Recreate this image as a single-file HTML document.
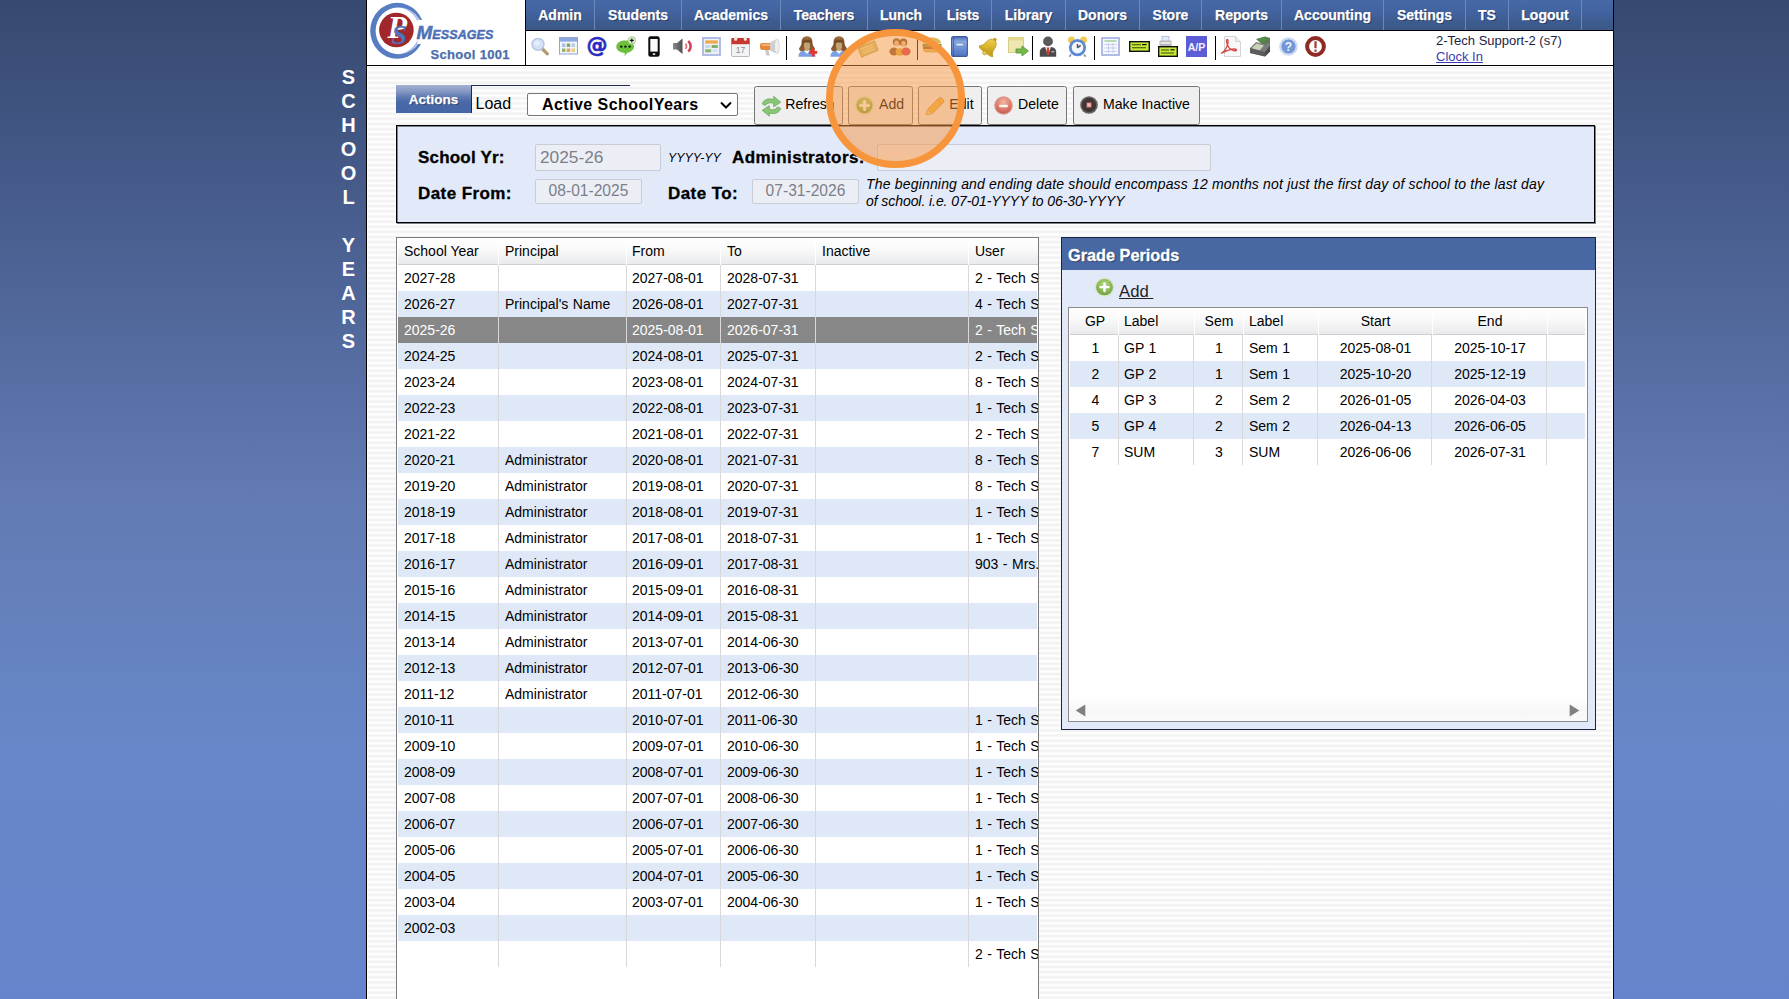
<!DOCTYPE html>
<html lang="en">
<head>
<meta charset="utf-8">
<title>School Years</title>
<style>
*{box-sizing:border-box;margin:0;padding:0}
html,body{width:1789px;height:999px;overflow:hidden}
body{position:relative;font-family:"Liberation Sans",sans-serif;font-size:14px;color:#000;
 background:linear-gradient(180deg,#364971 0px,#4b6192 250px,#627bb4 500px,#6887c8 750px,#6584cb 999px);}
.abs{position:absolute}
#wrap{position:absolute;left:366px;top:0;width:1248px;height:999px;background:#fff;border-left:1px solid #000;border-right:1px solid #000;overflow:hidden}
#stripes{position:absolute;left:1px;top:67px;right:1px;bottom:0;
 background:repeating-linear-gradient(180deg,#f2f2f2 0px,#f2f2f2 1px,#fdfdfd 2.400px,#fefefe 3.400px,#f2f2f2 5.140px);}
#vtitle{position:absolute;left:338.500px;top:65px;width:20px;text-align:center;word-break:break-all;overflow-wrap:anywhere;color:#fff;font:bold 20px/24px "Liberation Sans",sans-serif}
/* header */
#logo{position:absolute;left:0;top:0;width:158px;height:65px;background:#fff}
#hline{position:absolute;left:0;top:65px;width:1246px;height:1px;background:#000}
#vline{position:absolute;left:158px;top:0;width:1px;height:65px;background:#000}
#nav{position:absolute;left:159px;top:0;width:1087px;height:30px;background:linear-gradient(180deg,#466aa8 0%,#41629d 45%,#3d5b8e 75%,#3d5888 100%)}
#navline{position:absolute;left:159px;top:30px;width:1087px;height:1px;background:#000}
#nav a{-webkit-text-stroke:0.25px #fff;position:absolute;top:0;height:30px;line-height:30px;text-align:center;color:#fff;font:bold 14px/30px "Liberation Sans",sans-serif;text-decoration:none;border-right:1px solid #6c88bd;text-shadow:1px 1px 0 #24345c;white-space:nowrap}
#tools{position:absolute;left:159px;top:31px;width:1087px;height:34px;background:#fff}
#tools svg{position:absolute;top:4px}
#tools i{position:absolute;top:5px;width:1px;height:24px;background:#000}
#user{position:absolute;left:1069px;top:33px;font:13px/15px "Liberation Sans",sans-serif;color:#1c1c48;white-space:nowrap}
#user a{color:#3a3ab6;text-decoration:underline;position:relative;top:1px}
/* actions row (coords relative to #wrap inner: abs x - 367) */
#tab{-webkit-text-stroke:0.25px #fff;position:absolute;left:29px;top:85px;width:75px;height:28px;background:linear-gradient(180deg,#a3b0d0 0%,#8799c4 22%,#5c78b1 45%,#4868a7 62%,#4666a5 100%);color:#fff;font:bold 13.5px/29px "Liberation Sans",sans-serif;text-align:center;text-shadow:1px 1px 1px #2a3c66}
#tabtop{position:absolute;left:104px;top:85px;width:159px;height:1px;background:#1d2b50}
#tableft{position:absolute;left:104px;top:85px;width:1px;height:28px;background:#1d2b50}
#load{position:absolute;left:108.500px;top:92px;font:16px/24px "Liberation Sans",sans-serif;color:#000}
#sel{position:absolute;left:160px;top:93px;width:211px;height:23px;background:#fff;border:1px solid #767676;border-radius:2px;font:bold 16px/21px "Liberation Sans",sans-serif;letter-spacing:0.45px;color:#000;padding-left:14px;white-space:nowrap}
#sel svg{position:absolute;right:4px;top:6px}
.btn{position:absolute;top:86px;height:39px;background:#efefef;border:1px solid #767676;border-radius:2.500px;font:14.1px/37px "Liberation Sans",sans-serif;color:#000;white-space:nowrap}
.btn svg{position:absolute;left:6px;top:9px}
.btn span{position:absolute;top:-1px}
/* form panel */
#form{position:absolute;left:29px;top:125px;width:1200px;height:99px;background:#e2e9f9;border:2px solid transparent}
#form:before{content:"";box-sizing:border-box;position:absolute;left:-2px;top:-2px;width:1199px;height:98px;border:1px solid #000;box-shadow:inset 1px 1px 0 0 rgba(0,0,0,.45),1px 1px 0 0 rgba(0,0,0,.45)}
#form b{-webkit-text-stroke:0.3px #000;position:absolute;font:bold 17px/22px "Liberation Sans",sans-serif;letter-spacing:0.42px;color:#000;white-space:nowrap}
#form em{position:absolute;font:italic 14px/17px "Liberation Sans",sans-serif;letter-spacing:0.18px;color:#000;white-space:nowrap}
.inp{position:absolute;background:#eceef5;border:1px solid #c9ccd6;border-radius:2px;color:#7b7f8a;font-family:"Liberation Sans",sans-serif;white-space:nowrap}
/* grid */
#grid{position:absolute;left:29px;top:237px;width:643px;height:780px;background:#fff;border:1px solid #7b7b7b;overflow:hidden}
.gh{position:absolute;top:0;height:27px;background:linear-gradient(180deg,#fff 0%,#fafafa 40%,#e9eaec 100%);border-bottom:1px solid #cfcfcf;font:14px/26px "Liberation Sans",sans-serif;padding-left:6px;white-space:nowrap;overflow:hidden}
.row{position:absolute;left:1px;height:26px;width:639px;background:#fff;word-spacing:0.6px}
.row.alt{background:#dee8f7}
.row.sel{background:#878787;color:#fff}
.row span{position:absolute;top:0;height:26px;line-height:26px;padding-left:6px;white-space:nowrap;overflow:hidden;font-size:14px}
.cs{position:absolute;top:27px;width:1px;background:#d9d9d9}
/* grade periods */
#gp{position:absolute;left:694px;top:237px;width:535px;height:493px;background:#e2e9f9;border:1px solid #1b2440}
#gpt{-webkit-text-stroke:0.3px #fff;position:absolute;left:0;top:0;width:533px;height:32px;background:#4868a4;color:#fff;font:bold 16.3px/35px "Liberation Sans",sans-serif;padding-left:6px;text-shadow:1px 1px 1px #26375e}
#gpadd{position:absolute;left:57px;top:43px;font:16.7px/22px "Liberation Sans",sans-serif;color:#222;text-decoration:underline;white-space:pre}
#gg{position:absolute;left:6px;top:69px;width:520px;height:415px;background:#fff;border:1px solid #8b8b8b;overflow:hidden}
#gg .gh{padding-left:0;text-align:center}
#gg .row{left:1px;width:515px}
#gg .row span{padding-left:0;text-align:center}
#hl{position:absolute;left:826.2px;top:29px;width:138.5px;height:138.5px;border-radius:50%;border:7px solid #f7953c;background:rgba(248,148,62,.5)}
</style>
</head>
<body>
<div id="vtitle"><div>SCHOOL</div><div style="margin-top:24px">YEARS</div></div>
<div id="wrap">
<div id="stripes"></div>
<div id="logo"><svg width="158" height="65" viewBox="0 0 158 65"><defs><linearGradient id="lgm" x1="0" y1="0" x2="0" y2="1"><stop offset="0" stop-color="#5a80c6"/><stop offset="1" stop-color="#4263a8"/></linearGradient></defs>
<ellipse cx="30" cy="30.800" rx="23.200" ry="24.200" fill="none" stroke="#a9bde6" stroke-width="1.800"/>
<path fill-rule="evenodd" fill="#587cc2" d="M3.200 30.800a27 28 0 1 0 54 0a27 28 0 1 0 -54 0zM8.600 30.800a23.200 23.600 0 1 1 46.400 0a23.200 23.600 0 1 1 -46.400 0z"/>
<path d="M50.500 20h9v24h-9z" fill="#fff"/>
<path d="M52 19.500l6 1.500-6 2z" fill="#fff"/>
<circle cx="29.400" cy="30" r="17.300" fill="#a1272b"/>
<text x="20.500" y="37.800" font-family="Liberation Serif,serif" font-weight="bold" font-style="italic" font-size="32" fill="#fff">P</text>
<text x="24.500" y="44.200" font-family="Liberation Serif,serif" font-weight="bold" font-style="italic" font-size="28" fill="#4d73c0">S</text>
<text x="49.500" y="39.300" font-family="Liberation Sans,sans-serif" font-weight="bold" font-style="italic" fill="url(#lgm)" stroke="#4a6db6" stroke-width="0.450"><tspan font-size="19">M</tspan><tspan font-size="12.500" letter-spacing="0.100">ESSAGES</tspan></text>
<text x="63.500" y="58.600" font-family="Liberation Sans,sans-serif" font-weight="bold" font-size="13" letter-spacing="0.320" fill="#4a6ea9" stroke="#4a6ea9" stroke-width="0.250">School 1001</text>
</svg>
</div>
<div id="vline"></div>
<div id="nav">
<a style="left:0px;width:69px">Admin</a>
<a style="left:69px;width:87px">Students</a>
<a style="left:156px;width:99px">Academics</a>
<a style="left:255px;width:87px">Teachers</a>
<a style="left:342px;width:67px">Lunch</a>
<a style="left:409px;width:57px">Lists</a>
<a style="left:466px;width:74px">Library</a>
<a style="left:540px;width:74px">Donors</a>
<a style="left:614px;width:62px">Store</a>
<a style="left:676px;width:80px">Reports</a>
<a style="left:756px;width:102px">Accounting</a>
<a style="left:858px;width:82px">Settings</a>
<a style="left:940px;width:43px">TS</a>
<a style="left:983px;width:73px">Logout</a>
</div>
<div id="navline"></div>
<div id="tools">
<svg style="left:5px;top:6px" width="19" height="19" viewBox="0 0 19 19"><line x1="11.5" y1="12" x2="16.3" y2="16.8" stroke="#b39a6e" stroke-width="3.2" stroke-linecap="round"/><circle cx="7" cy="7.3" r="6" fill="#d3e0f7" stroke="#b4c3e0" stroke-width="1.3"/><circle cx="6" cy="6" r="2.6" fill="#e6eefc"/></svg>
<svg style="left:33px;top:6px" width="19" height="18" viewBox="0 0 19 18"><rect x="0.5" y="0.5" width="18" height="16.5" fill="#f0f4fc" stroke="#93a6d2"/><rect x="1" y="1" width="17" height="3.6" fill="#8ea8dc"/><rect x="3" y="6.5" width="3.4" height="3.4" fill="#a9bde6"/><rect x="7.8" y="6.5" width="3.4" height="3.4" fill="#7ea65c"/><rect x="12.6" y="6.5" width="3.4" height="3.4" fill="#b9c9ea"/><rect x="3" y="11.5" width="3.4" height="3.4" fill="#8db36c"/><rect x="7.8" y="11.5" width="3.4" height="3.4" fill="#e3a060"/><rect x="12.6" y="11.5" width="3.4" height="3.4" fill="#e8d27c"/></svg>
<svg style="left:59px;top:2px" width="24" height="26" viewBox="0 0 24 26"><text x="12" y="19.3" text-anchor="middle" font-family="DejaVu Sans,Liberation Sans,sans-serif" font-weight="bold" font-size="21" fill="#2b2bc2" stroke="#2b2bc2" stroke-width="0.6">@</text></svg>
<svg style="left:90px;top:5px" width="20" height="21" viewBox="0 0 20 21"><path d="M9 4.5c5 0 9 2.7 9 6.2 0 3-3 5.3-6.8 6l-2.6 3.6 0.2-3.4C4 16.7 0.3 14.1 0.3 10.7 0.3 7.2 4 4.5 9 4.5z" fill="#6cc03c"/><circle cx="5.2" cy="10.6" r="1.2" fill="#0c1a05"/><circle cx="9.4" cy="10.6" r="1.2" fill="#0c1a05"/><circle cx="13.6" cy="10.6" r="1.2" fill="#0c1a05"/><circle cx="15.8" cy="4.4" r="3.7" fill="#e4f2d8" stroke="#9acb7c" stroke-width="0.9"/><path d="M15.8 2.4v4M13.8 4.4h4" stroke="#1a1a1a" stroke-width="1.2"/></svg>
<svg style="left:122px;top:5px" width="12" height="21" viewBox="0 0 12 21"><rect x="0.3" y="0.2" width="11.4" height="20.6" rx="2.3" fill="#0d0d0d"/><rect x="2.3" y="3" width="7.4" height="12.6" fill="#fafafa"/><rect x="4.6" y="17.2" width="2.8" height="1.8" rx="0.8" fill="#e8e8e8"/></svg>
<svg style="left:146px;top:7px" width="23" height="17" viewBox="0 0 23 17"><defs><linearGradient id="spk" x1="0" x2="1"><stop offset="0" stop-color="#8a8a8a"/><stop offset="1" stop-color="#4d4d4d"/></linearGradient></defs><path d="M1 5h4l5.5-4.6v15.6L5 11.6H1z" fill="url(#spk)"/><path d="M13.4 5.6a3.6 3.6 0 0 1 0 5.2" fill="none" stroke="#e07080" stroke-width="1.8"/><path d="M16.2 3a7 7 0 0 1 0 10.6" fill="none" stroke="#cf4458" stroke-width="2.6"/></svg>
<svg style="left:176px;top:6px" width="19" height="19" viewBox="0 0 19 19"><rect x="1" y="1" width="17" height="17" fill="#eef2fb" stroke="#aab6e2" stroke-width="1.8"/><rect x="3.2" y="3.4" width="12.6" height="3.2" fill="#f0a848"/><rect x="3.2" y="8" width="5" height="3" fill="#c8d6f0"/><rect x="9.6" y="8" width="6.2" height="3" fill="#7fb26a"/><rect x="3.2" y="12.2" width="6" height="3.2" fill="#86b870"/><rect x="10.4" y="12.2" width="5.4" height="3.2" fill="#d5e0f4"/></svg>
<svg style="left:205px;top:5px" width="19" height="21" viewBox="0 0 19 21"><rect x="0.5" y="2.5" width="18" height="18" rx="1" fill="#f3f3f3" stroke="#b9b9b9"/><rect x="0.5" y="2" width="18" height="6.2" fill="#c8372c"/><rect x="3.2" y="0.4" width="3" height="4.4" rx="1.2" fill="#f1e6e4"/><rect x="12.8" y="0.4" width="3" height="4.4" rx="1.2" fill="#f1e6e4"/><text x="9.5" y="17" text-anchor="middle" font-family="Liberation Sans,sans-serif" font-size="8.5" fill="#8a8a8a">17</text></svg>
<svg style="left:233px;top:7px" width="21" height="19" viewBox="0 0 21 19"><path d="M1 7.2c0-1.4 1-2.2 2.2-2.2h8.3v7H3.2C2 12 1 11 1 9.8z" fill="#e58a3c"/><path d="M3 6h8v2H3z" fill="#f3b070"/><path d="M11 4.6L18 0.8c1.6 0 2.6 3.4 2.6 7.6s-1 7.6-2.6 7.6L11 12.4z" fill="#cfcfcf"/><path d="M17.6 1.2c1.3 0.4 2.3 3.4 2.3 7.2s-1 6.8-2.3 7.2c-1-1-1.6-4-1.6-7.2s0.6-6.2 1.6-7.2z" fill="#efefef"/><path d="M6 12h3.4l1.4 5.6H7.4z" fill="#c9c9c9"/></svg>
<i style="left:260px"></i>
<svg style="left:271.5px;top:5px" width="20" height="21" viewBox="0 0 20 21"><defs><linearGradient id="hr797" x1="0" y1="0" x2="0" y2="1"><stop offset="0" stop-color="#a87a4a"/><stop offset="0.350" stop-color="#7c4e28"/><stop offset="1" stop-color="#8e6034"/></linearGradient></defs><path d="M0.400 20.800c0-3.400 1.800-5.400 4.600-6h8c2.800 0.600 4.600 2.600 4.600 6z" fill="#7b9fe2"/><path d="M5.600 14.600l3.400 3.400 3.400-3.400z" fill="#f4f6fb"/><path d="M9 0.200c3.600 0 5.400 2.400 5.400 5.800 0 2.400 0.600 4 2 5.400 1.200 1.400 0.400 3.400-1.600 3.800-1.400 0.200-2.600-0.200-3.400-1H6.600c-0.800 0.800-2 1.200-3.400 1-2-0.400-2.800-2.400-1.600-3.800 1.400-1.400 2-3 2-5.400C3.600 2.600 5.400 0.200 9 0.200z" fill="url(#hr797)"/><ellipse cx="9" cy="9.600" rx="3.100" ry="5.200" fill="#c4a272"/><path d="M5.400 5.400c1.200-1.400 6-1.400 7.200 0-1 0.800-2.400 1.200-3.600 1.200s-2.600-0.400-3.600-1.200z" fill="#6e4422"/><path d="M15.200 12.400v8M11.200 16.400h8" stroke="#e43434" stroke-width="2.800"/></svg>
<svg style="left:303.5px;top:5px" width="20" height="21" viewBox="0 0 20 21"><defs><linearGradient id="hr829" x1="0" y1="0" x2="0" y2="1"><stop offset="0" stop-color="#a87a4a"/><stop offset="0.350" stop-color="#7c4e28"/><stop offset="1" stop-color="#8e6034"/></linearGradient></defs><path d="M0.400 20.800c0-3.400 1.800-5.400 4.600-6h8c2.800 0.600 4.600 2.600 4.600 6z" fill="#7b9fe2"/><path d="M5.600 14.600l3.400 3.400 3.400-3.400z" fill="#f4f6fb"/><path d="M9 0.200c3.600 0 5.400 2.400 5.400 5.800 0 2.400 0.600 4 2 5.400 1.200 1.400 0.400 3.400-1.600 3.800-1.400 0.200-2.600-0.200-3.400-1H6.600c-0.800 0.800-2 1.200-3.400 1-2-0.400-2.800-2.400-1.600-3.800 1.400-1.400 2-3 2-5.400C3.600 2.600 5.400 0.200 9 0.200z" fill="url(#hr829)"/><ellipse cx="9" cy="9.600" rx="3.100" ry="5.200" fill="#c4a272"/><path d="M5.400 5.400c1.200-1.400 6-1.400 7.200 0-1 0.800-2.400 1.200-3.600 1.200s-2.600-0.400-3.600-1.200z" fill="#6e4422"/></svg>
<svg style="left:332px;top:9px" width="21" height="18" viewBox="0 0 21 18"><g transform="rotate(-22 10 9)"><rect x="1" y="4" width="18" height="10" fill="#d2c878" stroke="#b8ae5e"/><path d="M4 6.500h12M4 9h12M4 11.500h12" stroke="#efe6a8" stroke-width="1.200"/></g></svg>
<svg style="left:363px;top:6px" width="22" height="19" viewBox="0 0 22 19"><circle cx="7.500" cy="5" r="3.800" fill="#8a5a34"/><circle cx="14.500" cy="5.400" r="3.800" fill="#7a4a2a"/><ellipse cx="7.500" cy="6.200" rx="2.200" ry="2.800" fill="#e8c49a"/><ellipse cx="14.500" cy="6.600" rx="2.200" ry="2.800" fill="#e8c49a"/><ellipse cx="5" cy="14.500" rx="4.600" ry="4" fill="#8a5a34"/><ellipse cx="11" cy="15" rx="4.400" ry="3.800" fill="#e0b040"/><ellipse cx="17" cy="14.500" rx="4.600" ry="4" fill="#d8405c"/></svg>
<i style="left:391px"></i>
<svg style="left:396px;top:6px" width="20" height="16" viewBox="0 0 20 16"><path d="M1 6.500C1 2.500 5 0.500 10 0.500s9 2 9 6z" fill="#e0b85a"/><rect x="0.500" y="7" width="19" height="2.600" fill="#7aa040"/><rect x="1" y="9.400" width="18" height="2.600" fill="#a8602c"/><path d="M1 12.200h18c0 2-1.600 3.200-3.600 3.200H4.600C2.600 15.400 1 14.200 1 12.200z" fill="#e0b85a"/></svg>
<svg style="left:425px;top:5px" width="17" height="21" viewBox="0 0 17 21"><defs><linearGradient id="bk" x1="0" y1="0" x2="0" y2="1"><stop offset="0" stop-color="#4f70b4"/><stop offset="0.250" stop-color="#86a6de"/><stop offset="1" stop-color="#4c74c0"/></linearGradient></defs><rect x="0.600" y="0.600" width="15.800" height="19.800" rx="2" fill="url(#bk)" stroke="#3f5c98" stroke-width="1.100"/><path d="M2.600 1v19" stroke="#3f5c98" stroke-width="0.800"/><path d="M5.500 8.600h6.500" stroke="#e8f0ff" stroke-width="1.600"/></svg>
<svg style="left:453px;top:5px" width="21" height="21" viewBox="0 0 21 21"><defs><linearGradient id="bl" x1="0" y1="0" x2="1" y2="1"><stop offset="0" stop-color="#f2dc6a"/><stop offset="0.550" stop-color="#dcb62a"/><stop offset="1" stop-color="#b08c18"/></linearGradient></defs><g transform="rotate(38 10.500 10.500)"><circle cx="10.500" cy="1.800" r="1.900" fill="#c6a224"/><path d="M10.500 2.600C6.800 2.600 5.400 5.800 5.100 9.800 4.900 13.400 3.400 15 1.400 16.800H19.600C17.600 15 16.100 13.400 15.900 9.800 15.600 5.800 14.200 2.600 10.500 2.600z" fill="url(#bl)" stroke="#b8961e" stroke-width="0.700"/><ellipse cx="10.500" cy="16.800" rx="9" ry="1.700" fill="#c9a628"/><circle cx="10.500" cy="18.600" r="1.900" fill="#e8cc58" stroke="#a88618" stroke-width="0.500"/></g></svg>
<svg style="left:482px;top:6px" width="21" height="20" viewBox="0 0 21 20"><rect x="0.500" y="0.500" width="15" height="15" fill="#efe7b0" stroke="#d6cc8e"/><rect x="0.500" y="0.500" width="15" height="3" fill="#e6da90"/><path d="M8 12h6V9l6.400 5-6.400 5v-3H8z" fill="#78b848" stroke="#5a963a" stroke-width="0.900"/></svg>
<i style="left:506px"></i>
<svg style="left:513px;top:5px" width="18" height="21" viewBox="0 0 18 21"><circle cx="9" cy="5.400" r="4.900" fill="#5a5a5a"/><path d="M0.800 20.800v-5c0-2.600 2-4.400 5-4.800h6.400c3 0.400 5 2.200 5 4.800v5z" fill="#4a4a4a"/><path d="M6 11l3 8 3-8z" fill="#f4dcd8"/><path d="M8.200 11.400h1.600l0.800 5.400-1.600 2.400-1.600-2.400z" fill="#d83a2e"/><rect x="12.400" y="15" width="3" height="1.400" fill="#b0b0b0"/></svg>
<svg style="left:541px;top:5px" width="21" height="21" viewBox="0 0 21 21"><circle cx="4.400" cy="4" r="3.400" fill="#f0ca52"/><circle cx="16.600" cy="4" r="3.400" fill="#f0ca52"/><path d="M4 18.500l-1.600 2.200M17 18.500l1.600 2.200" stroke="#7a8cb0" stroke-width="1.600"/><circle cx="10.500" cy="11.600" r="8.600" fill="#5f88d4"/><circle cx="10.500" cy="11.600" r="5.800" fill="#f2f7ff"/><path d="M10.500 11.800V8M10.500 11.800l3.200-2.400" stroke="#555" stroke-width="1.500" fill="none"/></svg>
<i style="left:568px"></i>
<svg style="left:575px;top:6px" width="19" height="19" viewBox="0 0 19 19"><rect x="1" y="1" width="17" height="17" fill="#f6f8fe" stroke="#a9b5e3" stroke-width="1.800"/><path d="M3.500 4h12" stroke="#9ccf8a" stroke-width="1.400"/><path d="M3.500 7.500h12M3.500 11h12M3.500 14.500h12M7.500 6v10M12 6v10" stroke="#c5cff0" stroke-width="1"/></svg>
<svg style="left:603px;top:10px" width="21" height="11" viewBox="0 0 21 11"><rect x="0.700" y="0.700" width="19.600" height="9.600" fill="#c6ea38" stroke="#101010" stroke-width="1.400"/><path d="M3 3.800h9M3 6.800h14" stroke="#3a4a08" stroke-width="1.100"/><path d="M13 3.600h4.600" stroke="#101010" stroke-width="1.200"/></svg>
<svg style="left:632px;top:5px" width="20" height="21" viewBox="0 0 20 21"><rect x="4" y="0.500" width="7" height="5" fill="#e4ecfa" stroke="#a8b8d8" stroke-width="0.800"/><rect x="1.500" y="4.500" width="12" height="7" rx="1" fill="#b8b8b8"/><rect x="2.500" y="6" width="10" height="2" fill="#e6e6e6"/><rect x="0.700" y="10.700" width="18.600" height="9.600" fill="#c6ea38" stroke="#101010" stroke-width="1.400"/><path d="M3 14h8M3 17h13" stroke="#3a4a08" stroke-width="1.100"/><path d="M12.500 13.800h4" stroke="#101010" stroke-width="1.200"/></svg>
<svg style="left:660px;top:5px" width="21" height="21" viewBox="0 0 21 21"><rect x="0" y="0" width="21" height="21" fill="#5c5cd6"/><text x="10.500" y="14.600" text-anchor="middle" font-family="Liberation Sans,sans-serif" font-weight="bold" font-size="10.500" fill="#f2f2ff">A/P</text></svg>
<i style="left:689px"></i>
<svg style="left:694px;top:5px" width="22" height="21" viewBox="0 0 22 21"><path d="M4.500 0.500h11l5 5v15h-16z" fill="#f9f9f9" stroke="#d4d4d4"/><path d="M15.500 0.500v5h5" fill="#ececec" stroke="#d4d4d4"/><path d="M1 17.500c2-1 5-4 6.500-8.500 0.800-2.400 0.800-5.500-0.300-5.500-1.200 0-0.700 3.400 0.800 6.500 1.600 3.200 5 5.400 8 4.600 1-0.400 0.400-1.600-1.400-1.600-3 0-9 2-13.600 4.500z" fill="none" stroke="#d44848" stroke-width="1.300"/></svg>
<svg style="left:723px;top:5px" width="22" height="21" viewBox="0 0 22 21"><path d="M7 3l9-2.600 5 1.600v7l-5 2z" fill="#5e7a54"/><path d="M8.500 4l7-2 3.500 1.200-7 2.400z" fill="#4a9a3c"/><path d="M1 12l6-6 9 2.500 5-2v9l-5 5L1 17z" fill="#7c7c7c"/><path d="M2.500 12.200l5-4.800 7.500 2-4.500 5z" fill="#c8d4b8"/><path d="M1 12l15 4v4.500L1 17z" fill="#5c5c5c"/><path d="M16 16l5-6.500v6l-5 5z" fill="#4a4a4a"/></svg>
<svg style="left:753px;top:6px" width="19" height="19" viewBox="0 0 19 19"><circle cx="9.500" cy="9.500" r="9.300" fill="#c9d6f0"/><circle cx="9.500" cy="9.500" r="7.600" fill="#7396d6" stroke="#e4ecfb" stroke-width="0.800"/><text x="9.500" y="13.800" text-anchor="middle" font-family="Liberation Sans,sans-serif" font-weight="bold" font-size="12" fill="#eef3ff">?</text></svg>
<svg style="left:779px;top:5px" width="21" height="21" viewBox="0 0 21 21"><circle cx="10.500" cy="10.500" r="8.400" fill="#fff" stroke="#8f2b23" stroke-width="4"/><rect x="9.400" y="5.200" width="2.200" height="7" fill="#a8382e"/><rect x="9.400" y="13.600" width="2.200" height="2.200" fill="#8a4038"/></svg>

</div>
<div id="user">2-Tech Support-2 (s7)<br><a>Clock In</a></div>
<div id="hline"></div>
<div id="tab">Actions</div><div id="tabtop"></div><div id="tableft"></div>
<div id="load">Load</div>
<div id="sel">Active SchoolYears<svg width="14" height="10" viewBox="0 0 14 10"><path d="M2 2.5 L7 7.5 L12 2.5" fill="none" stroke="#000" stroke-width="2"/></svg></div>
<div class="btn" style="left:387px;width:89px"><svg style="left:5px;top:8px" width="23" height="22.500" viewBox="0 0 21 20.500"><path d="M2 8.200C3.500 4 8 2.500 12.500 4.200V1.200L19 6.500l-6.500 4.300V7.800C9.500 6.500 6.500 7 5 9.600z" fill="#86c674" stroke="#6aa95a" stroke-width="0.700"/><path d="M19 12.300C17.500 16.500 13 18 8.500 16.300v3L2 14l6.500-4.300v3C11.500 14 14.500 13.500 16 10.900z" fill="#86c674" stroke="#6aa95a" stroke-width="0.700"/></svg><span style="left:30.3px">Refresh</span></div>
<div class="btn" style="left:481px;width:65px"><svg style="left:6px;top:8.7px" width="19" height="19" viewBox="0 0 19 19"><defs><radialGradient id="gB" cx="50%" cy="35%" r="65%"><stop offset="0" stop-color="#c4e096"/><stop offset="1" stop-color="#72a43e"/></radialGradient></defs><circle cx="9.500" cy="9.500" r="9.200" fill="#cfe3b4"/><circle cx="9.500" cy="9.500" r="7.800" fill="url(#gB)"/><path d="M9.500 5.200v8.600M5.200 9.500h8.600" stroke="#fff" stroke-width="2.600" stroke-linecap="round"/></svg><span style="left:30px">Add</span></div>
<div class="btn" style="left:551px;width:64px"><svg style="left:6px;top:8.5px" width="20" height="20" viewBox="0 0 20 20"><path d="M1 18.600l1.400-5L13.600 2.400c1-1 2.400-1 3.400 0l1 1c1 1 1 2.400 0 3.400L6.800 18z" fill="#f2b84a" stroke="#c98e2c" stroke-width="0.900"/><path d="M1 18.600l1.400-5 4.400 4.400z" fill="#e8c890"/><path d="M12.400 3.600l4.400 4.400" stroke="#d89a30" stroke-width="1"/></svg><span style="left:30.3px">Edit</span></div>
<div class="btn" style="left:620px;width:80px"><svg style="left:6px;top:8.7px" width="19" height="19" viewBox="0 0 19 19"><defs><radialGradient id="gD" cx="50%" cy="28%" r="75%"><stop offset="0" stop-color="#f4b4a6"/><stop offset="0.600" stop-color="#dc7c6c"/><stop offset="1" stop-color="#c9584a"/></radialGradient></defs><circle cx="9.500" cy="9.500" r="9.300" fill="#d9988c"/><circle cx="9.500" cy="9.500" r="8.100" fill="url(#gD)"/><rect x="5.200" y="8.700" width="8.600" height="2.500" rx="0.600" fill="#fff4ea"/></svg><span style="left:30px">Delete</span></div>
<div class="btn" style="left:706px;width:127px"><svg style="left:6px;top:9.2px" width="18" height="18" viewBox="0 0 18 18"><circle cx="9" cy="9" r="8.800" fill="#6a6262"/><circle cx="9" cy="9" r="7.200" fill="#3f3636"/><rect x="6.600" y="6.600" width="4.800" height="4.800" fill="#e88a8a"/><rect x="7.600" y="7.600" width="2.800" height="2.800" fill="#f4b8b4"/></svg><span style="left:29px">Make Inactive</span></div>

<div id="form">
<b style="left:20px;top:20px;letter-spacing:0.2px">School Yr:</b>
<div class="inp" style="left:137px;top:17px;width:126px;height:27px;font-size:17.3px;line-height:25px;padding-left:4px">2025-26</div>
<em style="left:270px;top:23px;font-size:12.4px;letter-spacing:0">YYYY-YY</em>
<b style="left:334px;top:20px">Administrators:</b>
<div class="inp" style="left:479px;top:17px;width:334px;height:27px"></div>
<b style="left:20px;top:56px">Date From:</b>
<div class="inp" style="left:137px;top:52px;width:107px;height:25px;font-size:15.6px;line-height:22px;text-align:center">08-01-2025</div>
<b style="left:270px;top:56px">Date To:</b>
<div class="inp" style="left:354px;top:52px;width:107px;height:25px;font-size:15.6px;line-height:22px;text-align:center">07-31-2026</div>
<em style="left:468px;top:49px">The beginning and ending date should encompass 12 months not just the first day of school to the last day<br><span style="letter-spacing:-0.07px">of school. i.e. 07-01-YYYY to 06-30-YYYY</span></em>
</div>
<div id="grid">
<div class="gh" style="left:1px;width:100px">School Year</div>
<div class="gh" style="left:102px;width:127px">Principal</div>
<div class="gh" style="left:230px;width:93px;padding-left:5px">From</div>
<div class="gh" style="left:324px;width:94px">To</div>
<div class="gh" style="left:419px;width:152px">Inactive</div>
<div class="gh" style="left:572px;width:69px">User</div>
<div class="row" style="top:27px"><span style="left:0px;width:100px">2027-28</span><span style="left:229px;width:93px;padding-left:5px">2027-08-01</span><span style="left:323px;width:94px">2028-07-31</span><span style="left:571px;width:69px">2 - Tech S</span></div>
<div class="row alt" style="top:53px"><span style="left:0px;width:100px">2026-27</span><span style="left:101px;width:127px">Principal's Name</span><span style="left:229px;width:93px;padding-left:5px">2026-08-01</span><span style="left:323px;width:94px">2027-07-31</span><span style="left:571px;width:69px">4 - Tech S</span></div>
<div class="row sel" style="top:79px"><span style="left:0px;width:100px">2025-26</span><span style="left:229px;width:93px;padding-left:5px">2025-08-01</span><span style="left:323px;width:94px">2026-07-31</span><span style="left:571px;width:69px">2 - Tech S</span></div>
<div class="row alt" style="top:105px"><span style="left:0px;width:100px">2024-25</span><span style="left:229px;width:93px;padding-left:5px">2024-08-01</span><span style="left:323px;width:94px">2025-07-31</span><span style="left:571px;width:69px">2 - Tech S</span></div>
<div class="row" style="top:131px"><span style="left:0px;width:100px">2023-24</span><span style="left:229px;width:93px;padding-left:5px">2023-08-01</span><span style="left:323px;width:94px">2024-07-31</span><span style="left:571px;width:69px">8 - Tech S</span></div>
<div class="row alt" style="top:157px"><span style="left:0px;width:100px">2022-23</span><span style="left:229px;width:93px;padding-left:5px">2022-08-01</span><span style="left:323px;width:94px">2023-07-31</span><span style="left:571px;width:69px">1 - Tech S</span></div>
<div class="row" style="top:183px"><span style="left:0px;width:100px">2021-22</span><span style="left:229px;width:93px;padding-left:5px">2021-08-01</span><span style="left:323px;width:94px">2022-07-31</span><span style="left:571px;width:69px">2 - Tech S</span></div>
<div class="row alt" style="top:209px"><span style="left:0px;width:100px">2020-21</span><span style="left:101px;width:127px">Administrator</span><span style="left:229px;width:93px;padding-left:5px">2020-08-01</span><span style="left:323px;width:94px">2021-07-31</span><span style="left:571px;width:69px">8 - Tech S</span></div>
<div class="row" style="top:235px"><span style="left:0px;width:100px">2019-20</span><span style="left:101px;width:127px">Administrator</span><span style="left:229px;width:93px;padding-left:5px">2019-08-01</span><span style="left:323px;width:94px">2020-07-31</span><span style="left:571px;width:69px">8 - Tech S</span></div>
<div class="row alt" style="top:261px"><span style="left:0px;width:100px">2018-19</span><span style="left:101px;width:127px">Administrator</span><span style="left:229px;width:93px;padding-left:5px">2018-08-01</span><span style="left:323px;width:94px">2019-07-31</span><span style="left:571px;width:69px">1 - Tech S</span></div>
<div class="row" style="top:287px"><span style="left:0px;width:100px">2017-18</span><span style="left:101px;width:127px">Administrator</span><span style="left:229px;width:93px;padding-left:5px">2017-08-01</span><span style="left:323px;width:94px">2018-07-31</span><span style="left:571px;width:69px">1 - Tech S</span></div>
<div class="row alt" style="top:313px"><span style="left:0px;width:100px">2016-17</span><span style="left:101px;width:127px">Administrator</span><span style="left:229px;width:93px;padding-left:5px">2016-09-01</span><span style="left:323px;width:94px">2017-08-31</span><span style="left:571px;width:69px">903 - Mrs.</span></div>
<div class="row" style="top:339px"><span style="left:0px;width:100px">2015-16</span><span style="left:101px;width:127px">Administrator</span><span style="left:229px;width:93px;padding-left:5px">2015-09-01</span><span style="left:323px;width:94px">2016-08-31</span></div>
<div class="row alt" style="top:365px"><span style="left:0px;width:100px">2014-15</span><span style="left:101px;width:127px">Administrator</span><span style="left:229px;width:93px;padding-left:5px">2014-09-01</span><span style="left:323px;width:94px">2015-08-31</span></div>
<div class="row" style="top:391px"><span style="left:0px;width:100px">2013-14</span><span style="left:101px;width:127px">Administrator</span><span style="left:229px;width:93px;padding-left:5px">2013-07-01</span><span style="left:323px;width:94px">2014-06-30</span></div>
<div class="row alt" style="top:417px"><span style="left:0px;width:100px">2012-13</span><span style="left:101px;width:127px">Administrator</span><span style="left:229px;width:93px;padding-left:5px">2012-07-01</span><span style="left:323px;width:94px">2013-06-30</span></div>
<div class="row" style="top:443px"><span style="left:0px;width:100px">2011-12</span><span style="left:101px;width:127px">Administrator</span><span style="left:229px;width:93px;padding-left:5px">2011-07-01</span><span style="left:323px;width:94px">2012-06-30</span></div>
<div class="row alt" style="top:469px"><span style="left:0px;width:100px">2010-11</span><span style="left:229px;width:93px;padding-left:5px">2010-07-01</span><span style="left:323px;width:94px">2011-06-30</span><span style="left:571px;width:69px">1 - Tech S</span></div>
<div class="row" style="top:495px"><span style="left:0px;width:100px">2009-10</span><span style="left:229px;width:93px;padding-left:5px">2009-07-01</span><span style="left:323px;width:94px">2010-06-30</span><span style="left:571px;width:69px">1 - Tech S</span></div>
<div class="row alt" style="top:521px"><span style="left:0px;width:100px">2008-09</span><span style="left:229px;width:93px;padding-left:5px">2008-07-01</span><span style="left:323px;width:94px">2009-06-30</span><span style="left:571px;width:69px">1 - Tech S</span></div>
<div class="row" style="top:547px"><span style="left:0px;width:100px">2007-08</span><span style="left:229px;width:93px;padding-left:5px">2007-07-01</span><span style="left:323px;width:94px">2008-06-30</span><span style="left:571px;width:69px">1 - Tech S</span></div>
<div class="row alt" style="top:573px"><span style="left:0px;width:100px">2006-07</span><span style="left:229px;width:93px;padding-left:5px">2006-07-01</span><span style="left:323px;width:94px">2007-06-30</span><span style="left:571px;width:69px">1 - Tech S</span></div>
<div class="row" style="top:599px"><span style="left:0px;width:100px">2005-06</span><span style="left:229px;width:93px;padding-left:5px">2005-07-01</span><span style="left:323px;width:94px">2006-06-30</span><span style="left:571px;width:69px">1 - Tech S</span></div>
<div class="row alt" style="top:625px"><span style="left:0px;width:100px">2004-05</span><span style="left:229px;width:93px;padding-left:5px">2004-07-01</span><span style="left:323px;width:94px">2005-06-30</span><span style="left:571px;width:69px">1 - Tech S</span></div>
<div class="row" style="top:651px"><span style="left:0px;width:100px">2003-04</span><span style="left:229px;width:93px;padding-left:5px">2003-07-01</span><span style="left:323px;width:94px">2004-06-30</span><span style="left:571px;width:69px">1 - Tech S</span></div>
<div class="row alt" style="top:677px"><span style="left:0px;width:100px">2002-03</span></div>
<div class="row" style="top:703px"><span style="left:571px;width:69px">2 - Tech S</span></div>
<div class="cs" style="left:101px;height:702px"></div>
<div class="cs" style="left:229px;height:702px"></div>
<div class="cs" style="left:323px;height:702px"></div>
<div class="cs" style="left:418px;height:702px"></div>
<div class="cs" style="left:571px;height:702px"></div>
</div>
<div id="gp"><div id="gpt">Grade Periods</div>
<svg class="abs" style="left:32px;top:39px" width="21" height="20.400" viewBox="0 0 20 20" preserveAspectRatio="none"><defs><radialGradient id="gA" cx="50%" cy="35%" r="65%"><stop offset="0" stop-color="#b9dc8a"/><stop offset="1" stop-color="#6fa03c"/></radialGradient></defs><circle cx="10" cy="10" r="9.3" fill="#d7e6c4"/><circle cx="10" cy="10" r="8" fill="url(#gA)"/><path d="M10 6.200v7.600M6.200 10h7.600" stroke="#fff" stroke-width="2.300" stroke-linecap="round"/></svg>
<div id="gpadd">Add </div>
<div id="gg">
<div class="gh" style="left:1px;width:48px;padding-left:2px">GP</div>
<div class="gh" style="left:50px;width:75px;text-align:left;padding-left:5px">Label</div>
<div class="gh" style="left:126px;width:48px">Sem</div>
<div class="gh" style="left:175px;width:74px;text-align:left;padding-left:5px">Label</div>
<div class="gh" style="left:250px;width:113px">Start</div>
<div class="gh" style="left:364px;width:114px">End</div>
<div class="gh" style="left:479px;width:37px"></div>
<div class="row" style="top:27px"><span style="left:0px;width:48px;padding-left:3px">1</span><span style="left:49px;width:75px;text-align:left;padding-left:5px">GP 1</span><span style="left:125px;width:48px">1</span><span style="left:174px;width:74px;text-align:left;padding-left:5px">Sem 1</span><span style="left:249px;width:113px">2025-08-01</span><span style="left:363px;width:114px">2025-10-17</span></div>
<div class="row alt" style="top:53px"><span style="left:0px;width:48px;padding-left:3px">2</span><span style="left:49px;width:75px;text-align:left;padding-left:5px">GP 2</span><span style="left:125px;width:48px">1</span><span style="left:174px;width:74px;text-align:left;padding-left:5px">Sem 1</span><span style="left:249px;width:113px">2025-10-20</span><span style="left:363px;width:114px">2025-12-19</span></div>
<div class="row" style="top:79px"><span style="left:0px;width:48px;padding-left:3px">4</span><span style="left:49px;width:75px;text-align:left;padding-left:5px">GP 3</span><span style="left:125px;width:48px">2</span><span style="left:174px;width:74px;text-align:left;padding-left:5px">Sem 2</span><span style="left:249px;width:113px">2026-01-05</span><span style="left:363px;width:114px">2026-04-03</span></div>
<div class="row alt" style="top:105px"><span style="left:0px;width:48px;padding-left:3px">5</span><span style="left:49px;width:75px;text-align:left;padding-left:5px">GP 4</span><span style="left:125px;width:48px">2</span><span style="left:174px;width:74px;text-align:left;padding-left:5px">Sem 2</span><span style="left:249px;width:113px">2026-04-13</span><span style="left:363px;width:114px">2026-06-05</span></div>
<div class="row" style="top:131px"><span style="left:0px;width:48px;padding-left:3px">7</span><span style="left:49px;width:75px;text-align:left;padding-left:5px">SUM</span><span style="left:125px;width:48px">3</span><span style="left:174px;width:74px;text-align:left;padding-left:5px">SUM</span><span style="left:249px;width:113px">2026-06-06</span><span style="left:363px;width:114px">2026-07-31</span></div>
<div class="cs" style="left:49px;height:130px"></div>
<div class="cs" style="left:124px;height:130px"></div>
<div class="cs" style="left:173px;height:130px"></div>
<div class="cs" style="left:248px;height:130px"></div>
<div class="cs" style="left:362px;height:130px"></div>
<div class="cs" style="left:477px;height:130px"></div>
<div class="abs" style="left:0;top:388px;width:518px;height:25px;background:linear-gradient(180deg,rgba(246,246,246,0) 0%,rgba(247,247,247,1) 60%,rgba(250,250,250,1) 100%)"></div>
<svg class="abs" style="left:5.500px;top:396px" width="11" height="13" viewBox="0 0 11 13"><path d="M10.300 0.600v11.800L0.700 6.500z" fill="#808080"/></svg>
<svg class="abs" style="left:500px;top:396px" width="11" height="13" viewBox="0 0 11 13"><path d="M0.700 0.600v11.800L10.300 6.500z" fill="#808080"/></svg>
</div></div>
</div>
<div id="hl"></div>
</body>
</html>
